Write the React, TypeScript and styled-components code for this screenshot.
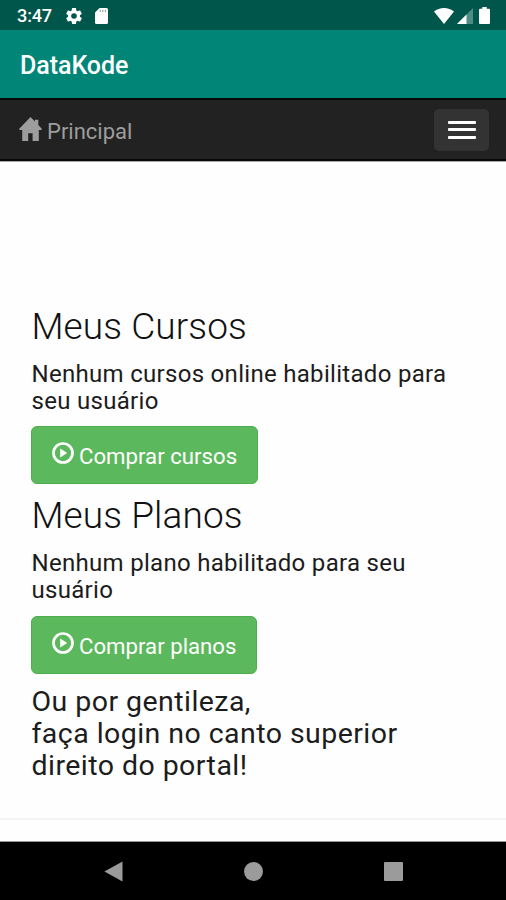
import React from "react";
import styled, { createGlobalStyle } from "styled-components";

const GlobalStyle = createGlobalStyle`
  *, *::before, *::after { box-sizing: border-box; }
  html, body { margin: 0; padding: 0; background: #fff; }
  body { font-family: Roboto, "Liberation Sans", sans-serif; }
  h1, h2, p { margin: 0; font-weight: 400; }
  svg { display: block; flex: none; }
`;

const Screen = styled.div`
  width: 506px;
  height: 900px;
  display: flex;
  flex-direction: column;
  overflow: hidden;
  background: #fefefe;
`;

const StatusBar = styled.header`
  height: 30px;
  flex: none;
  display: flex;
  align-items: center;
  padding: 1px 16px 0 17px;
  background: #00564b;
  color: #fff;
`;

const Clock = styled.span`
  width: 49px;
  font-size: 18.2px;
  font-weight: 500;
  line-height: 28px;
  letter-spacing: -0.2px;
`;

const StatusIcons = styled.div<{ $gap: number; $end?: boolean }>`
  display: flex;
  align-items: center;
  gap: ${(p) => p.$gap}px;
  margin-left: ${(p) => (p.$end ? "auto" : "0")};
`;

const AppBar = styled.div`
  height: 68px;
  flex: none;
  display: flex;
  align-items: center;
  padding: 4px 20px 0;
  background: #008577;
`;

const AppTitle = styled.h1`
  && { font-weight: 500; }
  font-size: 25px;
  line-height: 30px;
  letter-spacing: -0.05px;
  color: #fff;
`;

const NavBar = styled.nav`
  height: 63px;
  flex: none;
  display: flex;
  align-items: center;
  justify-content: space-between;
  padding: 0 17px 0 19px;
  background: #222;
  border-top: 2px solid #080808;
  border-bottom: 2px solid #080808;
  box-shadow: 0 1px 0 #a8a8a8;
`;

const Brand = styled.a`
  display: flex;
  align-items: center;
  gap: 5px;
  padding-top: 5px;
  font-size: 22px;
  line-height: 28px;
  color: #9d9d9d;

  svg { margin-top: -6px; }
`;

const MenuButton = styled.button`
  width: 55px;
  height: 42px;
  display: flex;
  flex-direction: column;
  align-items: center;
  justify-content: center;
  gap: 4.5px;
  padding: 0;
  border: 0;
  border-radius: 5px;
  background: #333;
`;

const MenuLine = styled.span`
  width: 28px;
  height: 3px;
  border-radius: 1px;
  background: #fff;
`;

const Content = styled.main`
  flex: 1;
  display: flex;
  flex-direction: column;
  align-items: flex-start;
  padding: 145.5px 31px 0;
  color: #1c1c1c;
`;

const Section = styled.section`
  height: 189.4px;
  flex: none;
  display: flex;
  flex-direction: column;
  align-items: flex-start;
`;

const Heading = styled.h2`
  padding-left: 0.5px;
  font-size: 37px;
  line-height: 40px;
  letter-spacing: 0.1px;
  && { font-weight: 350; }
  color: #111;
`;

const Message = styled.p`
  && { margin-top: 14px; font-weight: 370; }
  width: 430px;
  padding-left: 0.5px;
  font-size: 24px;
  line-height: 27.4px;
  letter-spacing: 0.3px;
`;

const BuyButton = styled.button`
  height: 58px;
  margin-top: 11px;
  padding: 2px 20px 0 21px;
  display: flex;
  align-items: center;
  gap: 5px;
  border: 1px solid #4cae4c;
  border-radius: 6px;
  background: #5cb85c;
  color: #fff;
  font: 400 22.2px/30px Roboto, "Liberation Sans", sans-serif;
  white-space: nowrap;

  svg { margin: -6px 0 0 -1px; }
`;

const Notice = styled.p`
  && { margin-top: 1px; font-weight: 370; }
  padding-left: 0.5px;
  font-size: 28.5px;
  line-height: 32px;
  letter-spacing: 0.45px;
  white-space: nowrap;
`;

const Footer = styled.footer`
  height: 24px;
  flex: none;
  border-top: 2px solid #f4f4f4;
  border-bottom: 1px solid #999;
`;

const SystemNav = styled.div`
  height: 58px;
  flex: none;
  display: flex;
  justify-content: center;
  align-items: center;
  gap: 121px;
  background: #000;
`;

const GearIcon = () => (
  <svg width="16" height="16" viewBox="2 2 20 20" fill="#fff">
    <path d="M19.43 12.98c.04-.32.07-.64.07-.98s-.03-.66-.07-.98l2.11-1.65c.19-.15.24-.42.12-.64l-2-3.46c-.12-.22-.39-.3-.61-.22l-2.49 1c-.52-.4-1.08-.73-1.69-.98l-.38-2.65C14.46 2.18 14.25 2 14 2h-4c-.25 0-.46.18-.49.42l-.38 2.65c-.61.25-1.17.59-1.69.98l-2.49-1c-.23-.09-.49 0-.61.22l-2 3.46c-.13.22-.07.49.12.64l2.11 1.65c-.04.32-.07.65-.07.98s.03.66.07.98l-2.11 1.65c-.19.15-.24.42-.12.64l2 3.46c.12.22.39.3.61.22l2.49-1c.52.4 1.08.73 1.69.98l.38 2.65c.03.24.24.42.49.42h4c.25 0 .46-.18.49-.42l.38-2.65c.61-.25 1.17-.59 1.69-.98l2.49 1c.23.09.49 0 .61-.22l2-3.46c.12-.22.07-.49-.12-.64l-2.11-1.65zM12 15.5a3.5 3.5 0 1 1 0-7 3.5 3.5 0 0 1 0 7z" />
  </svg>
);

const SdCardIcon = () => (
  <svg width="13" height="16" viewBox="0 0 13 16">
    <path d="M4.6 0H11.5Q13 0 13 1.5V14.5Q13 16 11.5 16H1.5Q0 16 0 14.5V4.6Z" fill="#fff" />
    <path d="M5.2 1.8V4M7.8 1.8V4M10.4 1.8V4" stroke="#7fa9a3" strokeWidth="1.1" />
  </svg>
);

const WifiIcon = () => (
  <svg width="20" height="16" viewBox="0 0 20 16">
    <path d="M0 3.6Q4.300 0 10 0T20 3.600L10 16Z" fill="#fff" />
  </svg>
);

const SignalIcon = () => (
  <svg width="16" height="16" viewBox="0 0 16 16">
    <path d="M16 0V16H0Z" fill="#4d8d84" />
    <path d="M9.500 6.500V16H0Z" fill="#fff" />
  </svg>
);

const BatteryIcon = () => (
  <svg width="11" height="17" viewBox="0 0 11 17">
    <path d="M3.300 0H7.700V1.700H10Q11 1.700 11 2.700V16Q11 17 10 17H1Q0 17 0 16V2.700Q0 1.700 1 1.700H3.300Z" fill="#fff" />
  </svg>
);

const HomeIcon = () => (
  <svg width="23" height="24" viewBox="0 0 23 24" fill="#9d9d9d">
    <path d="M11.500 0L16 4.500V2.700H19.300V7.900L23 12L22.200 12.900H19.800V24H13.600V16.300H9.200V24H3.200V12.900H.8L0 12Z" />
  </svg>
);

const PlayCircleIcon = () => (
  <svg width="22" height="22" viewBox="0 0 22 22">
    <circle cx="11" cy="11" r="9.500" fill="none" stroke="#fff" strokeWidth="2.700" />
    <path d="M8.200 6.400L15.200 11L8.200 15.600Z" fill="#fff" />
  </svg>
);

const BackIcon = () => (
  <svg width="19" height="21" viewBox="0 0 19 21">
    <path d="M18.500.6V20.400L.4 10.500Z" fill="#9b9b9b" />
  </svg>
);

const HomeDot = styled.span`
  width: 19px;
  height: 19px;
  border-radius: 50%;
  background: #9b9b9b;
`;

const RecentSquare = styled.span`
  width: 19px;
  height: 19px;
  border-radius: 1px;
  background: #9b9b9b;
`;

const offers = [
  { title: "Meus Cursos", message: "Nenhum cursos online habilitado para seu usuário", action: "Comprar cursos" },
  { title: "Meus Planos", message: "Nenhum plano habilitado para seu usuário", action: "Comprar planos" },
];

export default function App() {
  return (
    <>
      <GlobalStyle />
      <Screen>
        <StatusBar>
          <Clock>3:47</Clock>
          <StatusIcons $gap={12.5}>
            <GearIcon />
            <SdCardIcon />
          </StatusIcons>
          <StatusIcons $gap={3} $end>
            <WifiIcon />
            <SignalIcon />
            <span />
            <BatteryIcon />
          </StatusIcons>
        </StatusBar>
        <AppBar>
          <AppTitle>DataKode</AppTitle>
        </AppBar>
        <NavBar>
          <Brand>
            <HomeIcon />
            Principal
          </Brand>
          <MenuButton aria-label="Menu">
            <MenuLine />
            <MenuLine />
            <MenuLine />
          </MenuButton>
        </NavBar>
        <Content>
          {offers.map((offer) => (
            <Section key={offer.title}>
              <Heading>{offer.title}</Heading>
              <Message>{offer.message}</Message>
              <BuyButton>
                <PlayCircleIcon />
                {offer.action}
              </BuyButton>
            </Section>
          ))}
          <Notice>
            Ou por gentileza,
            <br />
            faça login no canto superior
            <br />
            direito do portal!
          </Notice>
        </Content>
        <Footer />
        <SystemNav>
          <BackIcon />
          <HomeDot />
          <RecentSquare />
        </SystemNav>
      </Screen>
    </>
  );
}
